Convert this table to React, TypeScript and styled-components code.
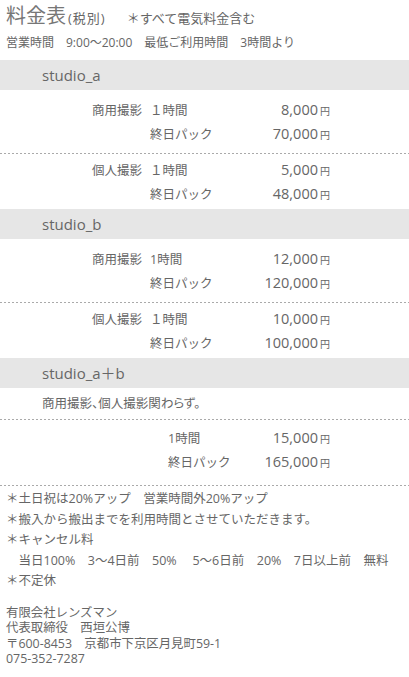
import React from "react";
import styled, { createGlobalStyle } from "styled-components";

const GlobalStyle = createGlobalStyle`
  body {
    margin: 0;
    background: #fff;
    font-family: "Open Sans", "Noto Sans CJK JP", sans-serif;
    color: #666;
  }
`;

type Row = { label?: string; period: string; price: string };
type Section = { name: string; note?: string; wide?: boolean; groups: Row[][] };

const sections: Section[] = [
  {
    name: "studio_a",
    groups: [
      [
        { label: "商用撮影", period: "１時間", price: "8,000" },
        { period: "終日パック", price: "70,000" },
      ],
      [
        { label: "個人撮影", period: "１時間", price: "5,000" },
        { period: "終日パック", price: "48,000" },
      ],
    ],
  },
  {
    name: "studio_b",
    groups: [
      [
        { label: "商用撮影", period: "1時間", price: "12,000" },
        { period: "終日パック", price: "120,000" },
      ],
      [
        { label: "個人撮影", period: "１時間", price: "10,000" },
        { period: "終日パック", price: "100,000" },
      ],
    ],
  },
  {
    name: "studio_a＋b",
    note: "商用撮影、個人撮影関わらず。",
    wide: true,
    groups: [
      [
        { period: "1時間", price: "15,000" },
        { period: "終日パック", price: "165,000" },
      ],
    ],
  },
];

export default function App() {
  return (
    <Page>
      <GlobalStyle />
      <Header>
        <TitleLine>
          <Title>料金表</Title>
          <TaxNote>(税別)</TaxNote>
          <Aside>＊すべて電気料金含む</Aside>
        </TitleLine>
        <Hours>営業時間　9:00〜20:00　最低ご利用時間　3時間より</Hours>
      </Header>

      {sections.map((s) => (
        <div key={s.name}>
          <Band>{s.name}</Band>
          {s.note && (
            <>
              <Note>{s.note}</Note>
              <Divider />
            </>
          )}
          {s.groups.map((g, gi) => (
            <React.Fragment key={gi}>
              {gi > 0 && <Divider />}
              <Group first={gi === 0} wide={s.wide}>
                {g.map((r, ri) => (
                  <PriceRow key={ri} wide={s.wide}>
                    <Label>{r.label}</Label>
                    <Period>{r.period}</Period>
                    <Price>{r.price}</Price>
                    <Yen>円</Yen>
                  </PriceRow>
                ))}
              </Group>
              {s.wide && <Divider />}
            </React.Fragment>
          ))}
        </div>
      ))}

      <Notes>
        <li>＊土日祝は20%アップ　営業時間外20%アップ</li>
        <li>＊搬入から搬出までを利用時間とさせていただきます。</li>
        <li>＊キャンセル料</li>
        <li>　当日100%　3〜4日前　50%　 5〜6日前　20%　7日以上前　無料</li>
        <li>＊不定休</li>
      </Notes>

      <Company>
        <div>有限会社レンズマン</div>
        <div>代表取締役　西垣公博</div>
        <div>〒600-8453　京都市下京区月見町59-1</div>
        <div>075-352-7287</div>
      </Company>
    </Page>
  );
}

const Page = styled.div`
  width: 409px;
`;

const Header = styled.div`
  padding: 4px 6px 8px;
`;

const TitleLine = styled.div`
  display: flex;
  align-items: baseline;
  height: 24px;
  line-height: 24px;
`;

const Title = styled.span`
  font-size: 20px;
  color: #777;
`;

const TaxNote = styled.span`
  font-size: 13px;
  letter-spacing: 1px;
  margin-left: 2px;
`;

const Aside = styled.span`
  font-size: 13px;
  margin-left: 21px;
`;

const Hours = styled.div`
  margin-top: 6px;
  font-size: 12px;
  line-height: 18px;
`;

const Band = styled.div`
  height: 30px;
  line-height: 30px;
  background: #e6e6e6;
  padding-left: 42px;
  font-size: 15px;
`;

const Note = styled.div`
  height: 31px;
  line-height: 31px;
  padding-left: 42px;
  font-size: 12.5px;
  font-feature-settings: "palt";
`;

const Divider = styled.div`
  height: 1px;
  background: repeating-linear-gradient(to right, #aaa 0 2px, transparent 2px 4px);
`;

const Group = styled.div<{ first?: boolean; wide?: boolean }>`
  padding: ${(p) => (p.wide ? "6px 0 11px" : p.first ? "8px 0 7px" : "4px 0 3px")};
`;

const PriceRow = styled.div<{ wide?: boolean }>`
  display: grid;
  grid-template-columns: ${(p) => (p.wide ? "168px 92px" : "150px 110px")} 58px auto;
  align-items: baseline;
  height: 24px;
  line-height: 24px;
  font-size: 12.5px;
`;

const Label = styled.span`
  text-align: right;
  padding-right: 8px;
`;

const Period = styled.span``;

const Price = styled.span`
  text-align: right;
  font-size: 14.5px;
`;

const Yen = styled.span`
  font-size: 10px;
  margin-left: 2px;
`;

const Notes = styled.ul`
  list-style: none;
  margin: 0;
  padding: 3px 6px 0;
  font-size: 12.5px;
  line-height: 20.5px;
  white-space: pre;
`;

const Company = styled.div`
  padding: 13px 6px 0;
  font-size: 12.4px;
  line-height: 15.5px;
`;
